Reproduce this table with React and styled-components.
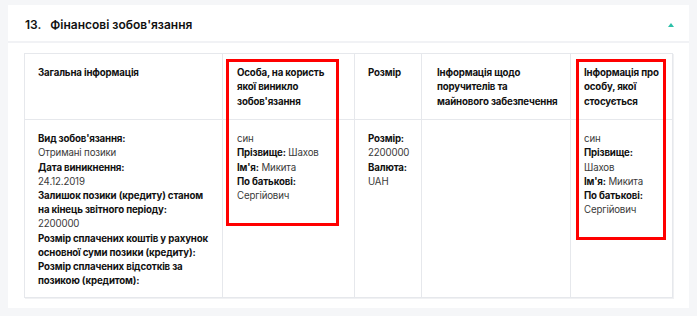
import React from "react";
import styled, { createGlobalStyle } from "styled-components";

const Global = createGlobalStyle`
  html, body { margin: 0; padding: 0; background: #f5f6f8; }
  body { font-family: Inter, "Noto Sans", sans-serif; -webkit-font-smoothing: antialiased; }
`;

const Page = styled.div`
  padding: 5px 8px 9px 8px;
  width: 681px;
`;

const Card = styled.section`
  background: #ffffff;
  display: flex;
  flex-direction: column;
`;

const CardHeader = styled.header`
  height: 38px;
  box-sizing: border-box;
  display: flex;
  align-items: center;
  justify-content: space-between;
  padding: 3px 15px 0 17px;
  border-bottom: 2px solid #f1f2f5;
`;

const Title = styled.h2`
  margin: 0;
  font-size: 12px;
  font-weight: 600;
  color: #111;
  display: flex;
  gap: 9px;
`;

const Toggle = styled.span`
  width: 0;
  height: 0;
  border-left: 3.5px solid transparent;
  border-right: 3.5px solid transparent;
  border-bottom: 4px solid #2cc0a8;
  margin-top: 1px;
`;

const CardBody = styled.div`
  padding: 10px 16px 10px 16px;
`;

const Table = styled.div`
  display: grid;
  grid-template-columns: 197px 132px 67px 149px 102px;
  border: 1px solid #e6e8ec;
  box-shadow: 1px 1px 0 #f0f1f3;
`;

const Cell = styled.div`
  position: relative;
  padding: ${(p) => (p.$head ? "12px 8px 10px 13px" : "12px 8px 9px 13px")};
  padding-left: ${(p) => p.$pl || 13}px;
  border-left: ${(p) => (p.$first ? "none" : "1px solid #e6e8ec")};
  border-bottom: ${(p) => (p.$head ? "1px solid #e6e8ec" : "none")};
  font-size: 9.7px;
  letter-spacing: -0.15px;
  line-height: 14.2px;
  color: #3a3a3a;
  white-space: nowrap;
  min-height: ${(p) => (p.$head ? 43 : 156)}px;
`;

const HeadText = styled.div`
  font-weight: 700;
  color: #111;
  line-height: 14.4px;
`;

const Label = styled.b`
  font-weight: 700;
  color: #111;
`;

const Line = styled.div``;

const Highlight = styled.div`
  position: absolute;
  left: ${(p) => p.$left}px;
  top: ${(p) => p.$top}px;
  width: ${(p) => p.$width}px;
  height: ${(p) => p.$height}px;
  border: 3px solid #ff0000;
  box-sizing: border-box;
  pointer-events: none;
`;

const Overlay = styled.div`
  position: relative;
`;

export default function App() {
  return (
    <>
      <Global />
      <Page>
        <Card>
          <CardHeader>
            <Title>
              <span>13.</span>
              <span>Фінансові зобов'язання</span>
            </Title>
            <Toggle />
          </CardHeader>
          <CardBody>
            <Overlay>
              <Table>
                <Cell $head $first>
                  <HeadText>Загальна інформація</HeadText>
                </Cell>
                <Cell $head $pl={14}>
                  <HeadText>
                    Особа, на користь
                    <br />
                    якої виникло
                    <br />
                    зобов'язання
                  </HeadText>
                </Cell>
                <Cell $head>
                  <HeadText>Розмір</HeadText>
                </Cell>
                <Cell $head $pl={15}>
                  <HeadText>
                    Інформація щодо
                    <br />
                    поручителів та
                    <br />
                    майнового забезпечення
                  </HeadText>
                </Cell>
                <Cell $head>
                  <HeadText>
                    Інформація про
                    <br />
                    особу, якої
                    <br />
                    стосується
                  </HeadText>
                </Cell>

                <Cell $first>
                  <Line><Label>Вид зобов'язання:</Label></Line>
                  <Line>Отримані позики</Line>
                  <Line><Label>Дата виникнення:</Label></Line>
                  <Line>24.12.2019</Line>
                  <Line><Label>Залишок позики (кредиту) станом<br />на кінець звітного періоду:</Label></Line>
                  <Line>2200000</Line>
                  <Line><Label>Розмір сплачених коштів у рахунок<br />основної суми позики (кредиту):</Label></Line>
                  <Line><Label>Розмір сплачених відсотків за<br />позикою (кредитом):</Label></Line>
                </Cell>
                <Cell $pl={14}>
                  <Line>син</Line>
                  <Line><Label>Прізвище:</Label> Шахов</Line>
                  <Line><Label>Ім'я:</Label> Микита</Line>
                  <Line><Label>По батькові:</Label></Line>
                  <Line>Сергійович</Line>
                </Cell>
                <Cell>
                  <Line><Label>Розмір:</Label></Line>
                  <Line>2200000</Line>
                  <Line><Label>Валюта:</Label></Line>
                  <Line>UAH</Line>
                </Cell>
                <Cell />
                <Cell>
                  <Line>син</Line>
                  <Line><Label>Прізвище:</Label></Line>
                  <Line>Шахов</Line>
                  <Line><Label>Ім'я:</Label> Микита</Line>
                  <Line><Label>По батькові:</Label></Line>
                  <Line>Сергійович</Line>
                </Cell>
              </Table>
              <Highlight $left={202} $top={6} $width={113} $height={167} />
              <Highlight $left={552} $top={6} $width={90} $height={181} />
            </Overlay>
          </CardBody>
        </Card>
      </Page>
    </>
  );
}
